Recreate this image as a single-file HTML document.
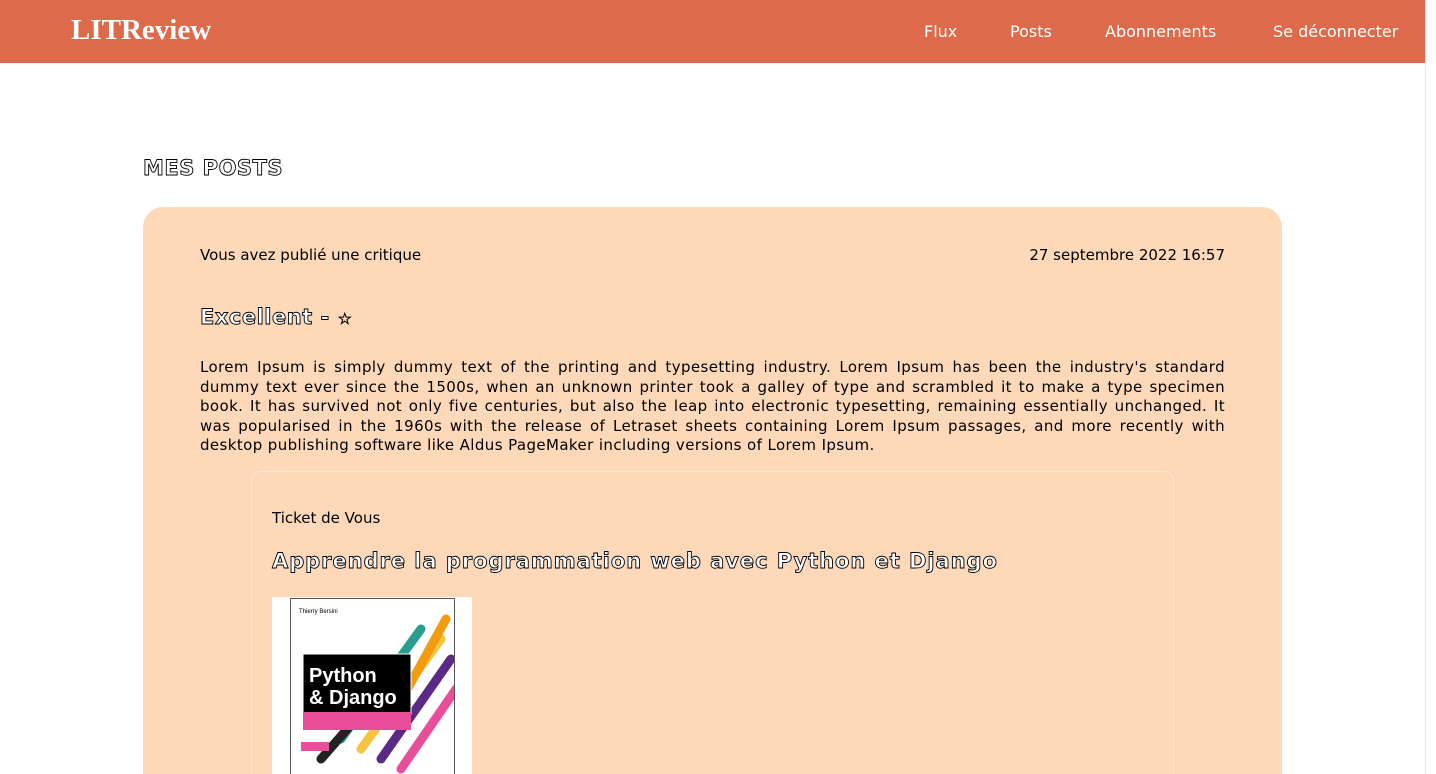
<!DOCTYPE html>
<html><head><meta charset="utf-8"><style>
*{margin:0;padding:0;box-sizing:border-box}
html,body{width:1436px;height:774px;overflow:hidden}
body{background:#fff;font-family:"DejaVu Sans",sans-serif;position:relative}
.hdr{position:absolute;left:0;top:0;width:1425px;height:63px;background:#dd6a4a}
.logo{position:absolute;left:71px;top:14px;font-family:"Liberation Serif",serif;font-weight:bold;font-size:29px;color:#fff}
.nav a{position:absolute;top:22px;color:#fff;font-size:16px;text-decoration:none}
.sb{position:absolute;left:1425px;top:0;width:11px;height:774px;background:#fff;border-left:1px solid #e8e8e8}
.th{position:absolute;left:1428px;top:2px;width:7px;height:360px;background:#c2c2c2;border-radius:4px}
.t{position:absolute;font-size:15px;color:#000}
.out,.t.out{color:#fff;-webkit-text-stroke:0.9px #000;font-weight:bold}
h1{position:absolute;left:143px;top:156px;font-size:21px;letter-spacing:0.5px}
.card{position:absolute;left:143px;top:207px;width:1139px;height:567px;background:#fed9b9;border-radius:20px 20px 0 0;overflow:hidden}
p.body{position:absolute;left:57px;top:151px;width:1025px;font-size:15px;line-height:19.5px;text-align:justify;letter-spacing:0.4px}
.tk{position:absolute;left:108px;top:264px;width:923px;height:303px;border:1px solid #fde8d4;border-bottom:none;border-radius:10px 10px 0 0}
.img{position:absolute;left:20px;top:125px;width:200px;height:178px;background:#fff;overflow:hidden}
.cov{position:absolute;left:18px;top:1px;width:165px;height:199px;border:1px solid #555;border-bottom:none;overflow:hidden}
</style></head><body>
<div class="hdr"><div class="logo">LITReview</div>
<div class="nav"><a style="left:924px">Flux</a><a style="left:1010px">Posts</a><a style="left:1105px">Abonnements</a><a style="left:1273px">Se déconnecter</a></div></div>
<div class="sb"><div class="th"></div></div>
<h1 class="out">MES POSTS</h1>
<div class="card">
<div class="t" style="left:57px;top:39px">Vous avez publié une critique</div>
<div class="t" style="right:57px;top:39px">27 septembre 2022 16:57</div>
<div class="t out" style="left:57px;top:98px;font-size:21px;letter-spacing:0.5px">Excellent - <span style="font-size:16px;-webkit-text-stroke:0.6px #000">☆</span></div>
<p class="body">Lorem Ipsum is simply dummy text of the printing and typesetting industry. Lorem Ipsum has been the industry's standard dummy text ever since the 1500s, when an unknown printer took a galley of type and scrambled it to make a type specimen book. It has survived not only five centuries, but also the leap into electronic typesetting, remaining essentially unchanged. It was popularised in the 1960s with the release of Letraset sheets containing Lorem Ipsum passages, and more recently with desktop publishing software like Aldus PageMaker including versions of Lorem Ipsum.</p>
<div class="tk">
<div class="t" style="left:20px;top:37px">Ticket de Vous</div>
<div class="t out" style="left:20px;top:77px;font-size:21px;letter-spacing:0.95px">Apprendre la programmation web avec Python et Django</div>
<div class="img"><div class="cov">
<svg width="165" height="200" viewBox="0 0 165 200">
<g stroke-linecap="round" stroke-width="9">
<line x1="70" y1="150" x2="150" y2="40" stroke="#f5c542"/>
<line x1="90" y1="160" x2="160" y2="60" stroke="#5b2a86"/>
<line x1="50" y1="140" x2="130" y2="30" stroke="#2a9d8f"/>
<line x1="110" y1="170" x2="165" y2="90" stroke="#e94e9b"/>
<line x1="100" y1="120" x2="155" y2="20" stroke="#f39c12"/>
<line x1="30" y1="160" x2="100" y2="80" stroke="#222"/>
</g>
<rect x="12" y="55" width="108" height="60" fill="#000" stroke="#fff"/>
<text x="18" y="83" fill="#fff" font-size="20" font-family="Liberation Sans" font-weight="bold">Python</text>
<text x="18" y="105" fill="#fff" font-size="20" font-family="Liberation Sans" font-weight="bold">&amp; Django</text>
<rect x="12" y="113" width="108" height="18" fill="#e94e9b"/>
<rect x="10" y="143" width="28" height="9" fill="#e94e9b"/>
<text x="8" y="14" font-size="6" font-family="Liberation Sans">Thierry Bersini</text>
</svg></div></div>
</div>
</div>
</body></html>
